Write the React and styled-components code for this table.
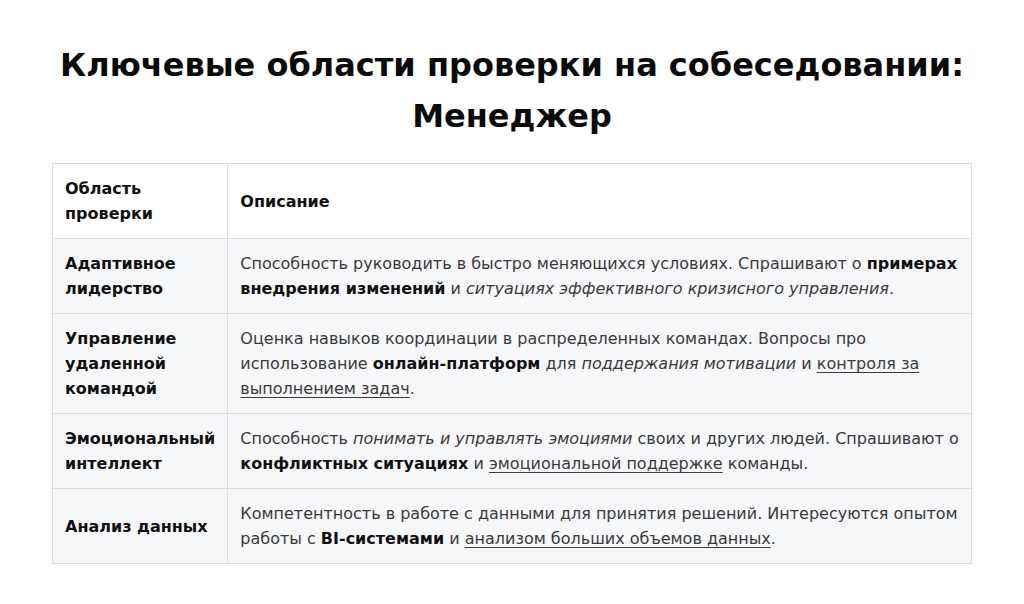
import styled, { createGlobalStyle } from "styled-components";

const GlobalStyle = createGlobalStyle`
  html, body {
    margin: 0;
    padding: 0;
    background: #fff;
  }
  body {
    font-family: "DejaVu Sans", "Liberation Sans", sans-serif;
  }
`;

const Page = styled.div`
  width: 920px;
  margin: 0 auto;
  padding-top: 40px;
`;

const Title = styled.h1`
  margin: 0 0 21px;
  font-size: 32px;
  line-height: 51px;
  font-weight: bold;
  text-align: center;
  color: #0a0a0a;
`;

const Table = styled.table`
  width: 100%;
  border-collapse: collapse;
  font-size: 16px;
  line-height: 25px;
`;

const HeadCell = styled.th`
  text-align: left;
  font-weight: bold;
  color: #111;
  background: #fff;
  border: 1px solid #dcdde0;
  padding: 12px 12px;
  width: ${(p) => p.$width || "auto"};
`;

const Row = styled.tr`
  background: #f6f7f9;
`;

const AreaCell = styled.td`
  font-weight: bold;
  color: #111;
  border: 1px solid #dcdde0;
  padding: 12px 12px;
  vertical-align: middle;
`;

const DescCell = styled.td`
  color: #3a3a3a;
  border: 1px solid #dcdde0;
  padding: 12px 12px;
  vertical-align: middle;
`;

const B = styled.strong`
  color: #111;
  font-weight: bold;
`;

const U = styled.span`
  text-decoration: underline;
  text-underline-offset: 3px;
`;

const rows = [
  {
    area: "Адаптивное лидерство",
    desc: (
      <>
        Способность руководить в быстро меняющихся условиях. Спрашивают о{" "}
        <B>примерах внедрения изменений</B> и{" "}
        <em>ситуациях эффективного кризисного управления</em>.
      </>
    ),
  },
  {
    area: "Управление удаленной командой",
    desc: (
      <>
        Оценка навыков координации в распределенных командах. Вопросы про
        использование <B>онлайн-платформ</B> для{" "}
        <em>поддержания мотивации</em> и{" "}
        <U>контроля за выполнением задач</U>.
      </>
    ),
  },
  {
    area: "Эмоциональный интеллект",
    desc: (
      <>
        Способность <em>понимать и управлять эмоциями</em> своих и других
        людей. Спрашивают о <B>конфликтных ситуациях</B> и{" "}
        <U>эмоциональной поддержке</U> команды.
      </>
    ),
  },
  {
    area: "Анализ данных",
    desc: (
      <>
        Компетентность в работе с данными для принятия решений. Интересуются
        опытом работы с <B>BI-системами</B> и{" "}
        <U>анализом больших объемов данных</U>.
      </>
    ),
  },
];

export default function App() {
  return (
    <>
      <GlobalStyle />
      <Page>
        <Title>
          Ключевые области проверки на собеседовании:
          <br />
          Менеджер
        </Title>
        <Table>
          <thead>
            <tr>
              <HeadCell $width="150px">Область проверки</HeadCell>
              <HeadCell>Описание</HeadCell>
            </tr>
          </thead>
          <tbody>
            {rows.map((r, i) => (
              <Row key={i}>
                <AreaCell>{r.area}</AreaCell>
                <DescCell>{r.desc}</DescCell>
              </Row>
            ))}
          </tbody>
        </Table>
      </Page>
    </>
  );
}
